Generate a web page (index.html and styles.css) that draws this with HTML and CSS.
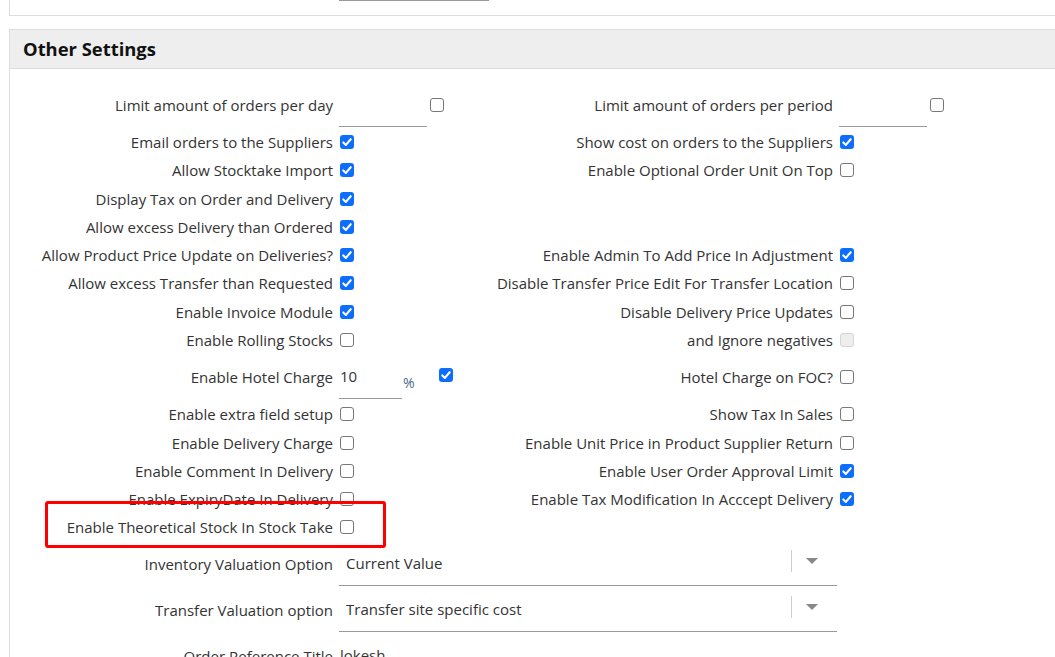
FILE: index.html
```html
<!DOCTYPE html>
<html>
<head>
<meta charset="utf-8">
<link rel="stylesheet" href="styles.css">
</head>
<body>
<div class="top-card"><div class="top-input"></div></div>

<div class="panel">
  <div class="panel-head">Other Settings</div>
  <div class="panel-body">
    <div class="row tall">
      <div class="cell"><span class="lbl">Limit amount of orders per day</span><span class="txt w88"></span><span class="cb off ml3"></span></div>
      <div class="cell"><span class="lbl">Limit amount of orders per period</span><span class="txt w88"></span><span class="cb off ml3"></span></div>
    </div>
    <div class="row">
      <div class="cell"><span class="lbl">Email orders to the Suppliers</span><span class="cb on"></span></div>
      <div class="cell"><span class="lbl">Show cost on orders to the Suppliers</span><span class="cb on"></span></div>
    </div>
    <div class="row">
      <div class="cell"><span class="lbl">Allow Stocktake Import</span><span class="cb on"></span></div>
      <div class="cell"><span class="lbl">Enable Optional Order Unit On Top</span><span class="cb off"></span></div>
    </div>
    <div class="row">
      <div class="cell"><span class="lbl">Display Tax on Order and Delivery</span><span class="cb on"></span></div>
      <div class="cell"></div>
    </div>
    <div class="row">
      <div class="cell"><span class="lbl">Allow excess Delivery than Ordered</span><span class="cb on"></span></div>
      <div class="cell"></div>
    </div>
    <div class="row">
      <div class="cell"><span class="lbl">Allow Product Price Update on Deliveries?</span><span class="cb on"></span></div>
      <div class="cell"><span class="lbl">Enable Admin To Add Price In Adjustment</span><span class="cb on"></span></div>
    </div>
    <div class="row">
      <div class="cell"><span class="lbl">Allow excess Transfer than Requested</span><span class="cb on"></span></div>
      <div class="cell"><span class="lbl">Disable Transfer Price Edit For Transfer Location</span><span class="cb off"></span></div>
    </div>
    <div class="row">
      <div class="cell"><span class="lbl">Enable Invoice Module</span><span class="cb on"></span></div>
      <div class="cell"><span class="lbl">Disable Delivery Price Updates</span><span class="cb off"></span></div>
    </div>
    <div class="row">
      <div class="cell"><span class="lbl">Enable Rolling Stocks</span><span class="cb off"></span></div>
      <div class="cell"><span class="lbl">and Ignore negatives</span><span class="cb dis"></span></div>
    </div>
    <div class="row tall">
      <div class="cell"><span class="lbl">Enable Hotel Charge</span><span class="txt w63">10</span><span class="pct">%</span><span class="cb on hotel"></span></div>
      <div class="cell"><span class="lbl">Hotel Charge on FOC?</span><span class="cb off"></span></div>
    </div>
    <div class="row">
      <div class="cell"><span class="lbl">Enable extra field setup</span><span class="cb off"></span></div>
      <div class="cell"><span class="lbl">Show Tax In Sales</span><span class="cb off"></span></div>
    </div>
    <div class="row">
      <div class="cell"><span class="lbl">Enable Delivery Charge</span><span class="cb off"></span></div>
      <div class="cell"><span class="lbl">Enable Unit Price in Product Supplier Return</span><span class="cb off"></span></div>
    </div>
    <div class="row">
      <div class="cell"><span class="lbl">Enable Comment In Delivery</span><span class="cb off"></span></div>
      <div class="cell"><span class="lbl">Enable User Order Approval Limit</span><span class="cb on"></span></div>
    </div>
    <div class="row">
      <div class="cell"><span class="lbl">Enable ExpiryDate In Delivery</span><span class="cb off"></span></div>
      <div class="cell"><span class="lbl">Enable Tax Modification In Acccept Delivery</span><span class="cb on"></span></div>
    </div>
    <div class="row">
      <div class="cell"><span class="lbl">Enable Theoretical Stock In Stock Take</span><span class="cb off"></span></div>
      <div class="cell"></div>
    </div>
    <div class="row tall">
      <div class="cell wide"><span class="lbl">Inventory Valuation Option</span>
        <div class="select"><span class="sel-val">Current Value</span><span class="sel-sep"></span><span class="sel-arrow"></span></div>
      </div>
    </div>
    <div class="row tall">
      <div class="cell wide"><span class="lbl">Transfer Valuation option</span>
        <div class="select"><span class="sel-val">Transfer site specific cost</span><span class="sel-sep"></span><span class="sel-arrow"></span></div>
      </div>
    </div>
    <div class="row tall">
      <div class="cell wide"><span class="lbl">Order Reference Title</span><span class="txt w150 plain">lokesh</span></div>
    </div>
  </div>
  <div class="annot"></div>
</div>
</body>
</html>
```

FILE: styles.css
```css
html, body {
  margin: 0;
  padding: 0;
  background: #fff;
  overflow: hidden;
}
body {
  font-family: "Open Sans", "Liberation Sans", sans-serif;
  font-size: 15px;
  color: #333;
  height: 657px;
}
.top-card {
  margin-left: 9px;
  height: 15px;
  border-left: 1px solid #ddd;
  border-bottom: 1px solid #ddd;
}
.top-input {
  margin-left: 329px;
  width: 150px;
  height: 0;
  border-bottom: 1px solid #999;
}
.panel {
  position: relative;
  margin-top: 13px;
  margin-left: 9px;
  border-left: 1px solid #ddd;
  border-top: 1px solid #ddd;
}
.panel-head {
  height: 39px;
  box-sizing: border-box;
  padding-bottom: 1px;
  background: #eee;
  border-bottom: 1px solid #ddd;
  padding-left: 13px;
  font-size: 18.4px;
  font-weight: 700;
  color: #111;
  display: flex;
  align-items: center;
}
.panel-body {
  padding-top: 13px;
}
.row {
  display: flex;
  height: 28.28px;
  align-items: center;
}
.row.tall {
  height: 46px;
}
.cell {
  width: 500px;
  display: flex;
  align-items: center;
  height: 100%;
}
.cell.wide {
  width: 1000px;
}
.lbl {
  width: 329px;
  flex: none;
  box-sizing: border-box;
  padding-right: 6px;
  display: flex;
  justify-content: flex-end;
  white-space: nowrap;
}
.cb {
  flex: none;
  box-sizing: border-box;
  width: 14px;
  height: 14px;
  border-radius: 3px;
  margin-left: 1px;
  position: relative;
}
.cb.off {
  border: 1px solid #777;
  background: #fff;
}
.cb.dis {
  border: 1px solid #d4d4d4;
  background: #eee;
}
.cb.on {
  background: #0d6efd url("data:image/svg+xml;utf8,<svg xmlns='http://www.w3.org/2000/svg' viewBox='0 0 14 14'><path d='M3.3 7.4 L5.9 9.9 L10.7 4.2' fill='none' stroke='white' stroke-width='2.1' stroke-linecap='round' stroke-linejoin='round'/></svg>") center/14px 14px no-repeat;
}
.cb.ml3 {
  margin-left: 3px;
}
.cb.hotel {
  margin-left: 24px;
  top: -2px;
}
.txt {
  flex: none;
  box-sizing: border-box;
  height: 45px;
  border-bottom: 1px solid #999;
  display: flex;
  align-items: center;
  padding-left: 1px;
  padding-bottom: 1px;
  align-self: flex-start;
}
.txt.plain {
  border-bottom: none;
}
.w88 { width: 88px; }
.w63 { width: 63px; }
.w150 { width: 150px; }
.pct {
  margin-left: 1px;
  color: #4a6a8a;
  font-size: 14px;
  position: relative;
  top: 5px;
}
.select {
  width: 498px;
  height: 45px;
  box-sizing: border-box;
  border-bottom: 1px solid #999;
  display: flex;
  align-items: center;
  align-self: flex-start;
}
.sel-val {
  flex: 1;
  padding-left: 7px;
  padding-bottom: 1px;
}
.sel-sep {
  width: 1px;
  height: 22px;
  background: #ccc;
  position: relative;
  top: -2px;
}
.sel-arrow {
  width: 45px;
  height: 22px;
  position: relative;
  top: -2px;
}
.sel-arrow::after {
  content: "";
  position: absolute;
  left: 14px;
  top: 8px;
  border-left: 6px solid transparent;
  border-right: 6px solid transparent;
  border-top: 6px solid #888;
}
.annot {
  position: absolute;
  left: 35px;
  top: 471px;
  width: 341px;
  height: 47px;
  box-sizing: border-box;
  border: 3px solid #f00;
  border-radius: 3px;
}
```
